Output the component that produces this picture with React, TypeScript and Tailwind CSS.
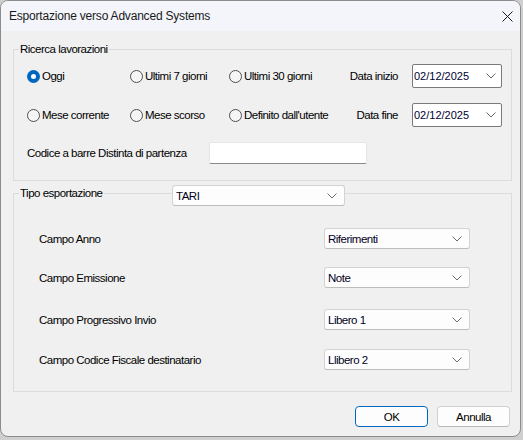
import React from "react";

const Chevron = () => (
  <svg width="10" height="6" viewBox="0 0 10 6" className="shrink-0">
    <path d="M0.5 0.5 L5 5 L9.5 0.5" fill="none" stroke="#6b6b6b" strokeWidth="1" />
  </svg>
);

const Radio = ({ checked, label }: { checked?: boolean; label: string }) => (
  <div className="flex items-center">
    {checked ? (
      <div className="w-[13px] h-[13px] rounded-full bg-[#0067c0] flex items-center justify-center shrink-0">
        <div className="w-[5px] h-[5px] rounded-full bg-white" />
      </div>
    ) : (
      <div className="w-[13px] h-[13px] rounded-full border border-[#4f4f4f] bg-[#f5f5f5] shrink-0" />
    )}
    <span className="ml-[2px]">{label}</span>
  </div>
);

const DatePicker = ({ value }: { value: string }) => (
  <div className="w-[90px] h-[24px] bg-white border border-[#7a7a7a] rounded-[2px] flex items-center justify-between pl-[1px] pr-[5px]">
    <span className="text-[#000033] text-[11px] tracking-normal">{value}</span>
    <Chevron />
  </div>
);

const Combo = ({ value, className }: { value: string; className: string }) => (
  <div
    className={
      "h-[21px] bg-[#fdfdfd] border border-[#d3d3d3] border-b-[#bdbdbd] rounded-[3px] flex items-center justify-between pl-[3px] pr-[7px] " +
      className
    }
  >
    <span className="text-[#000022]">{value}</span>
    <Chevron />
  </div>
);

const FieldRow = ({ label, value, mt }: { label: string; value: string; mt: string }) => (
  <div className={"flex items-center h-[21px] " + mt}>
    <div className="w-[285px]">{label}</div>
    <Combo value={value} className="w-[146px]" />
  </div>
);

export default function App() {
  return (
    <div className="w-[523px] h-[440px] bg-[#cfcfcf] font-['Liberation_Sans',sans-serif] text-[11.5px] tracking-[-0.5px] leading-[16px] text-black whitespace-nowrap">
      <div className="w-[521px] h-[437px] border border-[#8c8c8c] rounded-[8px] bg-[#f0f0f0] overflow-hidden flex flex-col">
        {/* Title bar */}
        <div className="h-[30px] bg-[#f3f5fb] flex items-center justify-between pl-[8px] pr-[7px] shrink-0">
          <span className="text-[12px] tracking-[-0.2px] text-[#1a1a1a]">Esportazione verso Advanced Systems</span>
          <svg width="11" height="11" viewBox="0 0 11 11">
            <path d="M0.5 0.5 L10.5 10.5 M10.5 0.5 L0.5 10.5" stroke="#1a1a1a" strokeWidth="1" />
          </svg>
        </div>

        {/* Ricerca lavorazioni */}
        <div className="relative mt-[18px] ml-[12px] w-[499px] h-[132px] border border-[#dcdcdc] pl-[13px] pt-[14px] flex flex-col gap-[15px] shrink-0">
          <span className="absolute left-[5px] top-[-9px] px-[1px] bg-[#f0f0f0]">Ricerca lavorazioni</span>
          <div className="flex items-center h-[24px]">
            <div className="w-[103px]"><Radio checked label="Oggi" /></div>
            <div className="w-[99px]"><Radio label="Ultimi 7 giorni" /></div>
            <div className="w-[110px]"><Radio label="Ultimi 30 giorni" /></div>
            <div className="w-[59px] text-right">Data inizio</div>
            <div className="ml-[14px]"><DatePicker value="02/12/2025" /></div>
          </div>
          <div className="flex items-center h-[24px]">
            <div className="w-[103px]"><Radio label="Mese corrente" /></div>
            <div className="w-[99px]"><Radio label="Mese scorso" /></div>
            <div className="w-[110px]"><Radio label="Definito dall'utente" /></div>
            <div className="w-[59px] text-right">Data fine</div>
            <div className="ml-[14px]"><DatePicker value="02/12/2025" /></div>
          </div>
          <div className="flex items-center h-[22px]">
            <div className="w-[182px]">Codice a barre Distinta di partenza</div>
            <div className="w-[158px] h-[22px] bg-white border border-[#e6e6e6] border-b-[#8a8a8a] rounded-[2px]" />
          </div>
        </div>

        {/* Tipo esportazione */}
        <div className="relative mt-[12px] ml-[12px] w-[499px] h-[199px] border border-[#dcdcdc] pl-[25px] pt-[34px] flex flex-col shrink-0">
          <span className="absolute left-[5px] top-[-9px] px-[1px] bg-[#f0f0f0]">Tipo esportazione</span>
          <div className="absolute left-[158px] top-[-9px]">
            <Combo value="TARI" className="w-[173px]" />
          </div>
          <FieldRow label="Campo Anno" value="Riferimenti" mt="mt-0" />
          <FieldRow label="Campo Emissione" value="Note" mt="mt-[18px]" />
          <FieldRow label="Campo Progressivo Invio" value="Libero 1" mt="mt-[21px]" />
          <FieldRow label="Campo Codice Fiscale destinatario" value="Llibero 2" mt="mt-[19px]" />
        </div>

        {/* Buttons */}
        <div className="mt-[14px] flex justify-end gap-[9px] pr-[10px]">
          <button className="w-[73px] h-[21px] bg-[#fdfdfd] border border-[#0067c0] rounded-[4px] leading-[16px] flex items-center justify-center">
            OK
          </button>
          <button className="w-[73px] h-[21px] bg-[#fdfdfd] border border-[#d0d0d0] border-b-[#b8b8b8] rounded-[4px] leading-[16px] flex items-center justify-center">
            Annulla
          </button>
        </div>
      </div>
    </div>
  );
}
